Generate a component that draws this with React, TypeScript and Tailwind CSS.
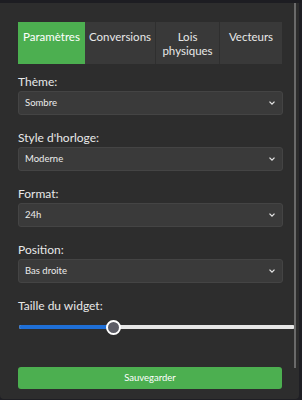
import React, { useState } from "react";

const font = { fontFamily: 'Lato, "Noto Sans", sans-serif' };

function Chevron() {
  return (
    <svg width="8" height="6" viewBox="0 0 8 6" className="absolute right-[6px] top-1/2 -translate-y-1/2">
      <path d="M1.5 1.6 L4 4.1 L6.5 1.6" stroke="#e5e5e5" strokeWidth="1.3" fill="none" />
    </svg>
  );
}

function Field({ label, value }: { label: string; value: string }) {
  return (
    <div className="flex flex-col">
      <div className="text-[12px] leading-[16px] text-[#e8e8e8] mb-[1px]">{label}</div>
      <div className="relative h-[24px] w-[265px] rounded-[3px] border border-[#444] bg-[#3a3a3a] flex items-center pl-[6px]">
        <span className="text-[9.5px] text-[#ececec]">{value}</span>
        <Chevron />
      </div>
    </div>
  );
}

export default function App() {
  const [tab] = useState(0);
  const tabs = [
    { t: "Paramètres", w: "w-[67px]" },
    { t: "Conversions", w: "w-[70px]" },
    { t: "Lois physiques", w: "w-[64px]" },
    { t: "Vecteurs", w: "w-[63px]" },
  ];
  return (
    <div style={font} className="w-[302px] h-[400px] bg-[#1f1f24] overflow-hidden">
      <div className="h-[3px] bg-[#1d1d22]" />
      <div className="h-[396px] w-[299px] bg-[#2d2d2d] rounded-b-[4px] relative flex">
        <div className="flex-1 flex flex-col pl-[18px] pt-[19px]">
          <div className="flex w-[264px] h-[42px] bg-[#393939]">
            {tabs.map((x, i) => (
              <div
                key={x.t}
                className={`${x.w} text-center text-[11.5px] leading-[14px] pt-[8px] px-[4px] ${
                  i === tab ? "bg-[#4caf50] text-white" : "text-[#e8e8e8]"
                } ${i > 1 ? "border-l border-[#2f2f2f]" : ""}`}
              >
                {x.t}
              </div>
            ))}
          </div>
          <div className="flex flex-col gap-[15px] mt-[10px]">
            <Field label="Thème:" value="Sombre" />
            <Field label="Style d'horloge:" value="Moderne" />
            <Field label="Format:" value="24h" />
            <Field label="Position:" value="Bas droite" />
          </div>
          <div className="mt-[15px] text-[12px] leading-[16px] text-[#e8e8e8]">Taille du widget:</div>
          <div className="relative h-[16px] mt-[5px] w-[277px]">
            <div className="absolute left-[1px] right-0 top-[6px] h-[4px] rounded-full bg-[#e6e6e6]" />
            <div className="absolute left-[1px] w-[94px] top-[6px] h-[4px] rounded-full bg-[#1f6fd6]" />
            <div className="absolute left-[88px] top-[1px] w-[15px] h-[15px] rounded-full bg-[#5d5d66] border-2 border-white" />
          </div>
          <div className="mt-[32px] w-[264px] h-[22px] rounded-[3px] bg-[#4caf50] flex items-center justify-center text-[9.5px] text-white">
            Sauvegarder
          </div>
        </div>
        <div className="absolute right-[3px] top-0 w-[2px] h-[365px] bg-[#6a6a6a]" />
      </div>
    </div>
  );
}
